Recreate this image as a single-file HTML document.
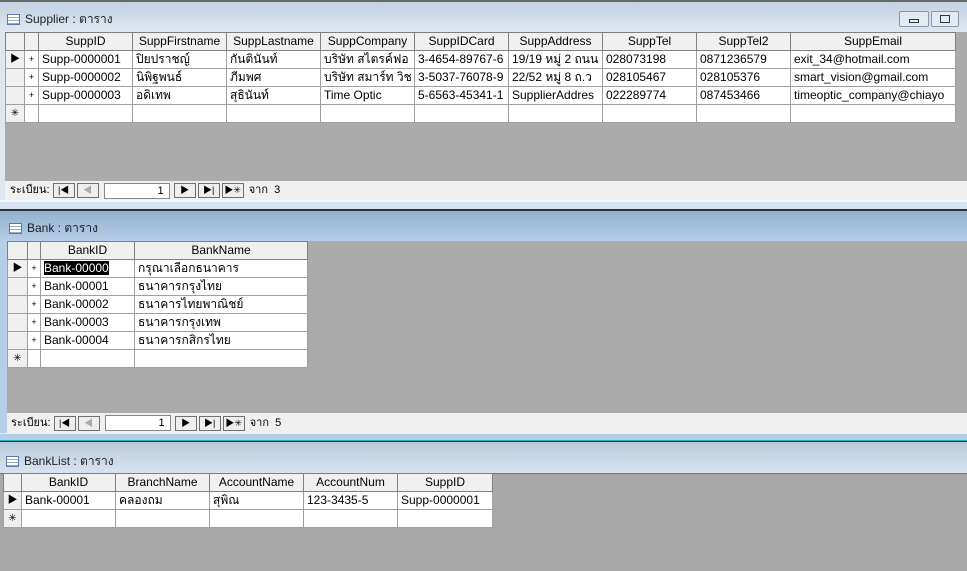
<!DOCTYPE html>
<html><head><meta charset="utf-8"><style>
*{margin:0;padding:0;box-sizing:border-box}
body{width:967px;height:571px;overflow:hidden;position:relative;background:#ababab;font-family:"Liberation Sans","Noto Sans CJK SC",sans-serif;font-size:12px;color:#000}
.a{position:absolute}
.t{font-size:12px;color:#222;display:flex;align-items:center;gap:5px;line-height:14px}
.ico{width:13px;height:11px;border:1px solid #5a7aa8;background:repeating-linear-gradient(#fff 0 2px,#9ab 2px 3px);}
table{border-collapse:collapse;position:absolute;background:#fff;table-layout:fixed}
td{border:1px solid #a0a0a0;height:18px;line-height:15px;padding:0 3px;white-space:nowrap;overflow:hidden;font-size:12px}
td div{height:16px;overflow:hidden}
tr.h td{background:#f0f0f0;text-align:center;border-color:#808080}
td.s{background:#f0f0f0;padding:0;text-align:center;font-size:10px}
td.p{padding:0;text-align:center;font-size:9px}
.nav{position:absolute;background:#f0f0f0;display:flex;align-items:center;font-size:11px;line-height:13px}
.b{width:22px;height:15px;border:1px solid #707070;background:#eee;margin-right:2px;font-size:9px;text-align:center;line-height:13px}
.in{width:66px;height:16px;border:1px solid #888;background:#fff;text-align:right;padding-right:5px;margin:0 4px 0 3px;line-height:14px}
</style></head><body>
<div class="a" style="left:0;top:0;width:967px;height:2px;background:#666"></div>
<div class="a" style="left:0;top:2px;width:967px;height:30px;background:linear-gradient(#c4d1e0,#dfe7f1)"></div>
<div class="a" style="left:0;top:32px;width:5px;height:168px;background:#dfe7f1"></div>
<div class="a t" style="left:7px;top:12px"><span class="ico"></span>Supplier : ตาราง</div>
<div class="a" style="left:899px;top:11px;width:30px;height:16px;border:1px solid #8a97a8;border-radius:2px;background:#e4eaf2"><div style="margin:7px auto 0;width:10px;height:4px;border:1px solid #333"></div></div>
<div class="a" style="left:931px;top:11px;width:28px;height:16px;border:1px solid #8a97a8;border-radius:2px;background:#e4eaf2"><div style="margin:3px auto 0;width:10px;height:8px;border:1px solid #333"></div></div>
<table style="left:5px;top:32px;width:950px">
<colgroup><col style="width:19px"><col style="width:14px"><col style="width:94px"><col style="width:94px"><col style="width:94px"><col style="width:94px"><col style="width:94px"><col style="width:94px"><col style="width:94px"><col style="width:94px"><col style="width:165px"></colgroup>
<tr class="h"><td class="s"></td><td></td><td><div>SuppID</div></td><td><div>SuppFirstname</div></td><td><div>SuppLastname</div></td><td><div>SuppCompany</div></td><td><div>SuppIDCard</div></td><td><div>SuppAddress</div></td><td><div>SuppTel</div></td><td><div>SuppTel2</div></td><td><div>SuppEmail</div></td></tr>
<tr><td class="s"><div>▶</div></td><td class="p"><div>+</div></td><td><div>Supp-0000001</div></td><td><div>ปิยปราชญ์</div></td><td><div>กันตินันท์</div></td><td><div>บริษัท สไตรค์ฟอ</div></td><td><div>3-4654-89767-6</div></td><td><div>19/19 หมู่ 2 ถนน</div></td><td><div>028073198</div></td><td><div>0871236579</div></td><td><div>exit_34@hotmail.com</div></td></tr>
<tr><td class="s"><div></div></td><td class="p"><div>+</div></td><td><div>Supp-0000002</div></td><td><div>นิพิฐพนธ์</div></td><td><div>ภีมพศ</div></td><td><div>บริษัท สมาร์ท วิช</div></td><td><div>3-5037-76078-9</div></td><td><div>22/52 หมู่ 8 ถ.ว</div></td><td><div>028105467</div></td><td><div>028105376</div></td><td><div>smart_vision@gmail.com</div></td></tr>
<tr><td class="s"><div></div></td><td class="p"><div>+</div></td><td><div>Supp-0000003</div></td><td><div>อดิเทพ</div></td><td><div>สุธินันท์</div></td><td><div>Time Optic</div></td><td><div>5-6563-45341-1</div></td><td><div>SupplierAddres</div></td><td><div>022289774</div></td><td><div>087453466</div></td><td><div>timeoptic_company@chiayo</div></td></tr>
<tr><td class="s"><div>✳</div></td><td><div></div></td><td></td><td></td><td></td><td></td><td></td><td></td><td></td><td></td><td></td></tr>
</table>
<div class="nav" style="left:5px;top:181px;width:962px;height:19px;padding-left:5px">ระเบียน:&nbsp;<span class="b">|◀</span><span class="b" style="color:#aaa">◀</span><span class="in">1</span><span class="b">▶</span><span class="b">▶|</span><span class="b">▶✳</span>&nbsp;จาก&nbsp;&nbsp;3</div>
<div class="a" style="left:0;top:200px;width:967px;height:9px;background:#d6e3f0;border-top:2px solid #f4f7fa"></div>
<div class="a" style="left:0;top:209px;width:967px;height:2px;background:#333"></div>
<div class="a" style="left:0;top:211px;width:967px;height:30px;background:linear-gradient(#93b0ce,#b6cfe8)"></div>
<div class="a t" style="left:9px;top:221px"><span class="ico"></span>Bank : ตาราง</div>
<div class="a" style="left:0;top:241px;width:7px;height:192px;background:#b6cfe8"></div>
<table style="left:7px;top:241px;width:300px">
<colgroup><col style="width:20px"><col style="width:13px"><col style="width:94px"><col style="width:173px"></colgroup>
<tr class="h"><td class="s"></td><td></td><td><div>BankID</div></td><td><div>BankName</div></td></tr>
<tr><td class="s"><div>▶</div></td><td class="p"><div>+</div></td><td><div><span style="background:#000;color:#fff">Bank-00000</span></div></td><td><div>กรุณาเลือกธนาคาร</div></td></tr>
<tr><td class="s"><div></div></td><td class="p"><div>+</div></td><td><div>Bank-00001</div></td><td><div>ธนาคารกรุงไทย</div></td></tr>
<tr><td class="s"><div></div></td><td class="p"><div>+</div></td><td><div>Bank-00002</div></td><td><div>ธนาคารไทยพาณิชย์</div></td></tr>
<tr><td class="s"><div></div></td><td class="p"><div>+</div></td><td><div>Bank-00003</div></td><td><div>ธนาคารกรุงเทพ</div></td></tr>
<tr><td class="s"><div></div></td><td class="p"><div>+</div></td><td><div>Bank-00004</div></td><td><div>ธนาคารกสิกรไทย</div></td></tr>
<tr><td class="s"><div>✳</div></td><td><div></div></td><td></td><td></td></tr>
</table>
<div class="nav" style="left:7px;top:413px;width:960px;height:20px;padding-left:4px">ระเบียน:&nbsp;<span class="b">|◀</span><span class="b" style="color:#aaa">◀</span><span class="in">1</span><span class="b">▶</span><span class="b">▶|</span><span class="b">▶✳</span>&nbsp;จาก&nbsp;&nbsp;5</div>
<div class="a" style="left:0;top:433px;width:967px;height:7px;background:#b4cde8;border-top:1px solid #eee"></div>
<div class="a" style="left:0;top:440px;width:967px;height:2px;background:#123;border-top:1px solid #1bb"></div>
<div class="a" style="left:0;top:442px;width:967px;height:31px;background:linear-gradient(#b9c9da,#d8e3ef)"></div>
<div class="a t" style="left:6px;top:454px"><span class="ico"></span>BankList : ตาราง</div>
<div class="a" style="left:0;top:473px;width:967px;height:98px;background:#a8a8a8;border-top:1px solid #777"></div>
<table style="left:3px;top:473px;width:489px">
<colgroup><col style="width:18px"><col style="width:94px"><col style="width:94px"><col style="width:94px"><col style="width:94px"><col style="width:95px"></colgroup>
<tr class="h"><td class="s"></td><td><div>BankID</div></td><td><div>BranchName</div></td><td><div>AccountName</div></td><td><div>AccountNum</div></td><td><div>SuppID</div></td></tr>
<tr><td class="s"><div>▶</div></td><td><div>Bank-00001</div></td><td><div>คลองถม</div></td><td><div>สุพิณ</div></td><td><div>123-3435-5</div></td><td><div>Supp-0000001</div></td></tr>
<tr><td class="s"><div>✳</div></td><td><div></div></td><td></td><td></td><td></td><td></td></tr>
</table>
</body></html>
